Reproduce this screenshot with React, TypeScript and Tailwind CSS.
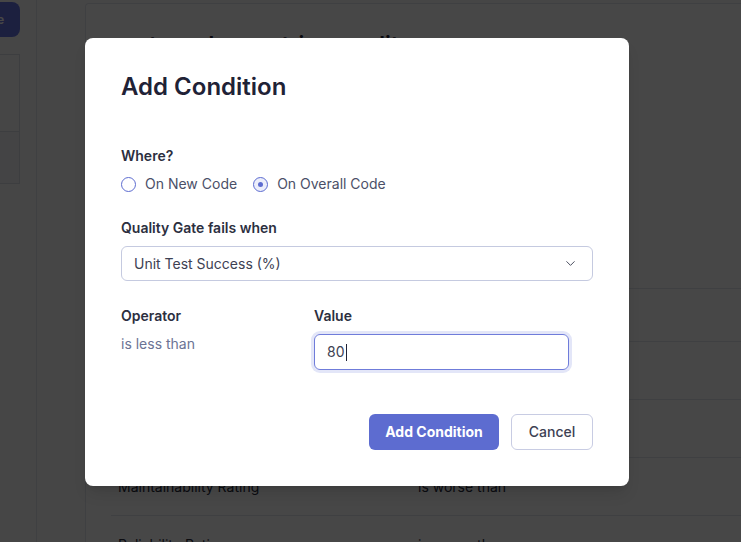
import { ChevronDown } from 'lucide-react'

const rows = [
  { top: 'h-[53px]', name: '', op: '' },
  { top: 'h-[58px]', name: '', op: '' },
  { top: 'h-[58px]', name: '', op: '' },
  { top: 'h-[58px]', name: 'Maintainability Rating', op: 'is worse than' },
  { top: 'h-[58px]', name: 'Reliability Rating', op: 'is worse than' },
]

function BackgroundPage() {
  return (
    <div className="flex h-full w-full bg-[#fbfbfc]">
      <aside className="flex w-[37px] shrink-0 flex-col border-r border-[#e3e5ec]">
        <div className="mt-[2px] flex h-[35px] w-[20px] items-center rounded-r-lg bg-[#6673e2] text-xs font-bold text-white">
          <span className="-ml-[3px]">e</span>
        </div>
        <div className="mt-[17px] flex h-[130px] w-[20px] flex-col border-y border-r border-[#dcdfe7]">
          <div className="h-[77px] border-b border-[#dcdfe7]" />
          <div className="flex-1 bg-[#f3f4f7]" />
        </div>
      </aside>
      <main className="flex-1 pl-[48px] pt-[3px]">
        <div className="h-[600px] rounded-tl border-l border-t border-[#e3e5ec] bg-white pl-[25px] pt-[24px]">
          <h1 className="text-[22px] font-semibold text-[#1f2236]">custom_dev_metrics_quality</h1>
          <div className="mt-[227px]">
            {rows.map((row, i) => (
              <div key={i} className={`flex items-center border-t border-[#e3e5ec] text-sm text-[#2c2f3f] ${row.top}`}>
                <span className="w-[307px] pl-[7px]">{row.name}</span>
                <span>{row.op}</span>
              </div>
            ))}
          </div>
        </div>
      </main>
    </div>
  )
}

function Radio({ checked, label }: { checked?: boolean; label: string }) {
  return (
    <label className="flex items-center gap-[9px]">
      <span
        className={`flex h-[15px] w-[15px] items-center justify-center rounded-full border ${
          checked ? 'border-[#5d6cd0] bg-[#eceefb]' : 'border-[#5d6cd0] bg-white'
        }`}
      >
        {checked && <span className="h-[5px] w-[5px] rounded-full bg-[#5d6cd0]" />}
      </span>
      <span className="text-sm text-[#4b5068]">{label}</span>
    </label>
  )
}

export default function App() {
  return (
    <div className="relative h-[542px] w-[741px] overflow-hidden font-['Inter',sans-serif]">
      <BackgroundPage />
      <div className="absolute inset-0 bg-[rgba(0,0,0,0.72)]" />

      <div className="absolute left-[85px] top-[38px] h-[448px] w-[544px] rounded-lg bg-white px-[36px] pt-[33px] shadow-lg">
        <h2 className="text-2xl font-semibold leading-8 text-[#1f2236]">Add Condition</h2>

        <div className="mt-[43px] text-sm font-semibold text-[#2c2f3f]">Where?</div>
        <div className="mt-[8px] flex gap-[16px]">
          <Radio label="On New Code" />
          <Radio checked label="On Overall Code" />
        </div>

        <div className="mt-[24px] text-sm font-semibold text-[#2c2f3f]">Quality Gate fails when</div>
        <div className="mt-[8px] flex h-[35px] items-center justify-between rounded-md border border-[#c5cae0] pl-[12px] pr-[14px] text-sm text-[#3d4153]">
          <span>Unit Test Success (%)</span>
          <ChevronDown size={15} strokeWidth={1.5} className="text-[#3d4153]" />
        </div>

        <div className="mt-[25px] flex">
          <div className="w-[193px]">
            <div className="text-sm font-semibold text-[#2c2f3f]">Operator</div>
            <div className="mt-[8px] text-sm text-[#6b7394]">is less than</div>
          </div>
          <div>
            <div className="text-sm font-semibold text-[#2c2f3f]">Value</div>
            <div className="mt-[8px] flex h-[36px] w-[255px] items-center rounded-md border border-[#6f7cda] pl-[12px] text-sm text-[#3d4153] ring-[3px] ring-[#e3e6f8]">
              <span>80</span>
              <span className="ml-px h-[17px] w-px bg-[#1f2236]" />
            </div>
          </div>
        </div>

        <div className="mt-[44px] flex justify-end gap-[12px]">
          <button className="h-[36px] w-[130px] rounded-md bg-[#5d6cd0] text-sm font-bold text-white">Add Condition</button>
          <button className="h-[36px] w-[82px] rounded-md border border-[#c8cce3] bg-white text-sm font-medium text-[#3d4153]">Cancel</button>
        </div>
      </div>
    </div>
  )
}
